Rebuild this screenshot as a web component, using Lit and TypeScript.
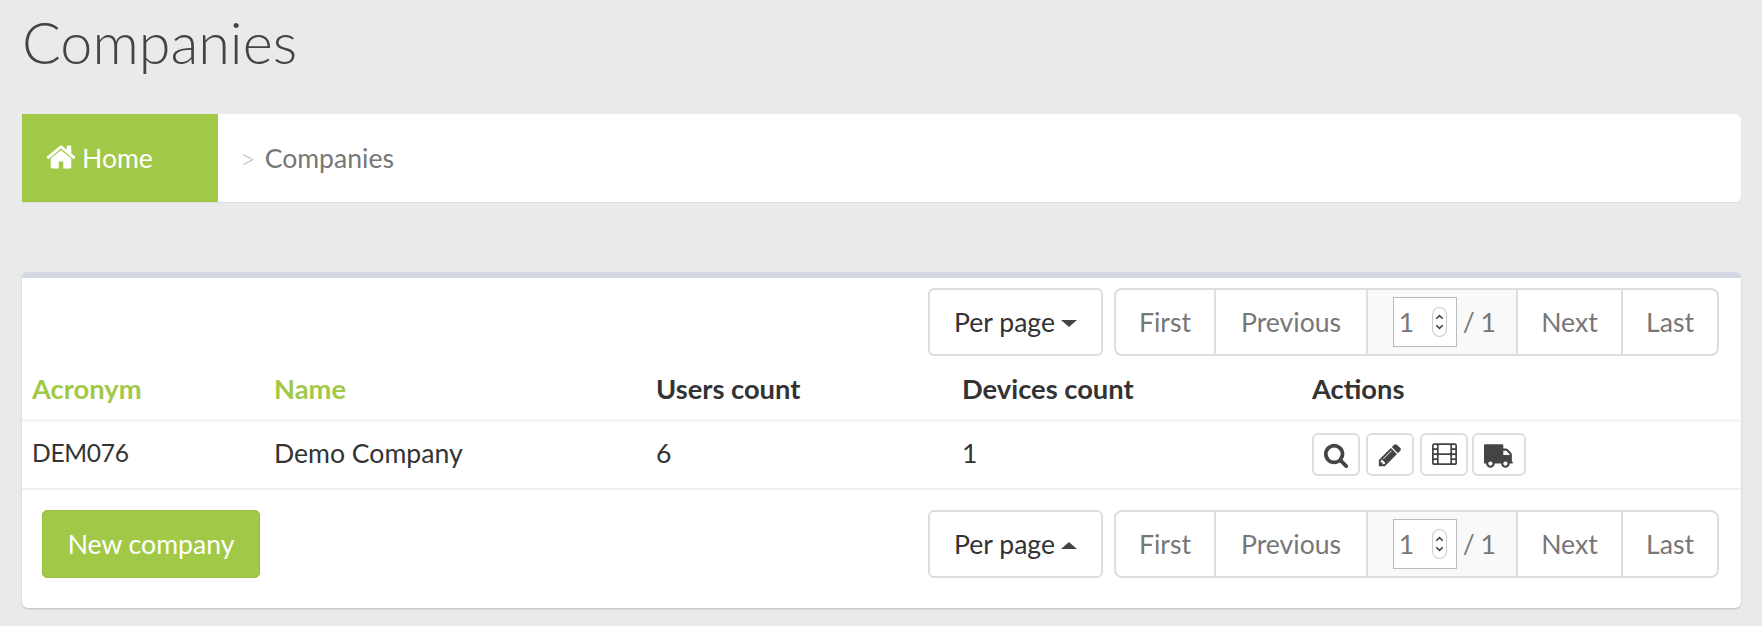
import { LitElement, html, css, svg } from "lit";
import { customElement } from "lit/decorators.js";

const ICONS: Record<string, [string, string]> = {
  home: ["0 0 1792 1792", "M1472 992v480q0 26-19 45t-45 19h-384v-384h-256v384h-384q-26 0-45-19t-19-45v-480q0-1 .5-3t.5-3l575-474 575 474q1 2 1 6zm223-69l-62 74q-8 9-21 11h-3q-13 0-21-7l-692-577-692 577q-12 8-24 7-13-2-21-11l-62-74q-8-10-7-23.5t11-21.5l719-599q32-26 76-26t76 26l244 204v-195q0-14 9-23t23-9h192q14 0 23 9t9 23v408l219 182q10 8 11 21.5t-7 23.5z"],
  search: ["0 0 1792 1792", "M1216 832q0-185-131.5-316.5t-316.5-131.5-316.5 131.5-131.5 316.5 131.5 316.5 316.5 131.5 316.5-131.5 131.5-316.5zm512 832q0 52-38 90t-90 38q-54 0-90-38l-343-342q-179 124-399 124-143 0-273.5-55.5t-225-150-150-225-55.5-273.5 55.5-273.5 150-225 225-150 273.5-55.5 273.5 55.5 225 150 150 225 55.5 273.5q0 220-124 399l343 343q37 37 37 90z"],
  pencil: ["0 0 1792 1792", "M491 1536l91-91-235-235-91 91v107h128v128h107zm523-928q0-22-22-22-10 0-17 7l-542 542q-7 7-7 17 0 22 22 22 10 0 17-7l542-542q7-7 7-17zm-54-192l416 416-832 832h-416v-416zm683 96q0 53-37 90l-166 166-416-416 166-165q36-38 90-38 53 0 91 38l235 234q37 39 37 91z"],
  film: ["0 0 1920 1792", "M384 1472v-128q0-26-19-45t-45-19h-128q-26 0-45 19t-19 45v128q0 26 19 45t45 19h128q26 0 45-19t19-45zm0-384v-128q0-26-19-45t-45-19h-128q-26 0-45 19t-19 45v128q0 26 19 45t45 19h128q26 0 45-19t19-45zm0-384v-128q0-26-19-45t-45-19h-128q-26 0-45 19t-19 45v128q0 26 19 45t45 19h128q26 0 45-19t19-45zm1024 768v-512q0-26-19-45t-45-19h-768q-26 0-45 19t-19 45v512q0 26 19 45t45 19h768q26 0 45-19t19-45zm-1024-1152v-128q0-26-19-45t-45-19h-128q-26 0-45 19t-19 45v128q0 26 19 45t45 19h128q26 0 45-19t19-45zm1408 1152v-128q0-26-19-45t-45-19h-128q-26 0-45 19t-19 45v128q0 26 19 45t45 19h128q26 0 45-19t19-45zm-384-768v-512q0-26-19-45t-45-19h-768q-26 0-45 19t-19 45v512q0 26 19 45t45 19h768q26 0 45-19t19-45zm384 384v-128q0-26-19-45t-45-19h-128q-26 0-45 19t-19 45v128q0 26 19 45t45 19h128q26 0 45-19t19-45zm0-384v-128q0-26-19-45t-45-19h-128q-26 0-45 19t-19 45v128q0 26 19 45t45 19h128q26 0 45-19t19-45zm0-384v-128q0-26-19-45t-45-19h-128q-26 0-45 19t-19 45v128q0 26 19 45t45 19h128q26 0 45-19t19-45zm128-160v1344q0 66-47 113t-113 47h-1600q-66 0-113-47t-47-113v-1344q0-66 47-113t113-47h1600q66 0 113 47t47 113z"],
  truck: ["0 0 1792 1792", "M640 1408q0-52-38-90t-90-38-90 38-38 90 38 90 90 38 90-38 38-90zm-384-512h384v-256h-158q-13 0-22 9l-195 195q-9 9-9 22v30zm1280 512q0-52-38-90t-90-38-90 38-38 90 38 90 90 38 90-38 38-90zm256-1088v1024q0 15-4 26.5t-13.5 18.5-16.5 11.5-23.5 6-22.5 2-25.5 0-22.5-.5q0 106-75 181t-181 75-181-75-75-181h-384q0 106-75 181t-181 75-181-75-75-181h-64q-3 0-22.5.5t-25.5 0-22.5-2-23.5-6-16.5-11.5-13.5-18.5-4-26.5q0-26 19-45t45-19v-320q0-8-.5-35t0-38 2.5-34.5 6.5-37 14-30.5 22.5-30l198-198q19-19 50.5-32t58.5-13h160v-192q0-26 19-45t45-19h1024q26 0 45 19t19 45z"],
};

const icon = (name: string, cls: string) => {
  const [vb, d] = ICONS[name];
  return html`<svg class="icon ${cls}" viewBox=${vb} aria-hidden="true">${svg`<path fill="currentColor" d=${d}></path>`}</svg>`;
};

@customElement("app-root")
export class AppRoot extends LitElement {
  static styles = css`
    :host {
      display: block;
      height: 626px;
      box-sizing: border-box;
      background: #eaeaea;
      font-family: "Lato", "Noto Sans", sans-serif;
      font-size: 26.6px;
      color: #333;
      padding: 0 21px 0 22px;
      overflow: hidden;
    }
    h1 {
      margin: 0;
      height: 114px;
      box-sizing: border-box;
      padding-top: 4px;
      font-size: 57.5px;
      line-height: 76px;
      font-weight: 300;
      color: #444;
    }
    .crumbs {
      display: flex;
      align-items: center;
      height: 88px;
      background: #fff;
      border-radius: 0 6px 6px 0;
      box-shadow: 0 1px 1px rgba(0, 0, 0, 0.05);
      color: #777;
    }
    .home {
      display: flex;
      align-items: center;
      gap: 5px;
      align-self: stretch;
      width: 196px;
      box-sizing: border-box;
      padding-left: 23px;
      background: #a1c947;
      color: #fff;
    }
    .home .icon { width: 32px; height: 32px; margin-top: -2px; }
    .sep { margin-left: 22px; margin-right: 9px; color: #bbb; font-size: 27px; font-weight: 300; }
    .panel {
      margin-top: 70px;
      background: #fff;
      border-top: 6px solid #d3d8e3;
      border-radius: 6px;
      box-shadow: 0 1px 2px rgba(0, 0, 0, 0.2);
      height: 336px;
      box-sizing: border-box;
    }
    .top {
      display: flex;
      justify-content: flex-end;
      padding: 10px 22px 0 0;
    }
    .pager { display: flex; gap: 11px; }
    .perpage {
      display: flex;
      align-items: center;
      justify-content: center;
      gap: 6px;
      width: 175px;
      height: 68px;
      box-sizing: border-box;
      border: 2px solid #ddd;
      border-radius: 6px;
      color: #333;
    }
    .caret { width: 0; height: 0; border-left: 8px solid transparent; border-right: 8px solid transparent; border-top: 7px solid #444; margin-top: 3px; }
    .caret.up { border-top: 0; border-bottom: 7px solid #444; }
    .group {
      display: flex;
      height: 68px;
      width: 605px;
      box-sizing: border-box;
      border: 2px solid #ddd;
      border-radius: 8px;
      color: #777;
      overflow: hidden;
    }
    .cell {
      display: flex;
      align-items: center;
      justify-content: center;
      box-sizing: border-box;
      border-left: 2px solid #ddd;
    }
    .cell:first-child { border-left: 0; }
    .first { width: 98px; }
    .prev { width: 152px; }
    .cur { width: 150px; background: #f9f9f9; gap: 6px; padding-left: 4px; }
    .next { width: 105px; }
    .last { flex: 1; }
    .slash { letter-spacing: -0.6px; }
    .num {
      display: flex;
      align-items: center;
      justify-content: space-between;
      width: 64px;
      height: 50px;
      box-sizing: border-box;
      border: 1px solid #bbb;
      background: #fff;
      padding: 0 9px 0 5px;
    }
    .spin {
      width: 15px;
      height: 30px;
      display: block;
    }
    table {
      width: 100%;
      border-collapse: collapse;
      table-layout: fixed;
    }
    th, td { text-align: left; padding: 0 0 0 10px; }
    th { height: 64px; font-weight: 700; font-size: 27.3px; border-bottom: 3px solid #f4f4f4; padding-top: 2px; box-sizing: border-box; }
    th.sort { color: #a1c947; }
    td { height: 69px; border-bottom: 2px solid #f0f0f0; box-sizing: border-box; padding-bottom: 4px; }
    td.code { font-size: 24.6px; letter-spacing: -0.3px; }
    .actions { display: flex; gap: 6px; padding-top: 4px; }
    .act {
      display: flex;
      align-items: center;
      justify-content: center;
      width: 48px;
      height: 43px;
      box-sizing: border-box;
      border: 2px solid #ddd;
      border-radius: 6px;
      color: #444;
    }
    .act.wide { width: 54px; margin-left: -2px; }
    .act .icon { width: 26px; height: 26px; }
    .act .film { width: 25px; }
    .act .flip { transform: scaleX(-1); width: 30px; height: 30px; }
    .bottom {
      display: flex;
      justify-content: space-between;
      padding: 20px 22px 0 20px;
    }
    .new {
      display: flex;
      align-items: center;
      justify-content: center;
      width: 218px;
      height: 68px;
      box-sizing: border-box;
      background: #a1c947;
      border: 1px solid #96bd3c;
      border-radius: 5px;
      color: #fff;
    }
  `;

  private pager(up: boolean) {
    return html`<div class="pager">
      <div class="perpage">Per page <span class="caret ${up ? "up" : ""}"></span></div>
      <div class="group">
        <div class="cell first">First</div>
        <div class="cell prev">Previous</div>
        <div class="cell cur">
          <div class="num">1
            <svg class="spin" viewBox="0 0 14 28" fill="none">
              <rect x="0.5" y="0.5" width="13" height="27" rx="6.5" fill="#fff" stroke="#ccc"></rect>
              <path d="M4 11l3-3 3 3M4 17l3 3 3-3" stroke="#444" stroke-width="1.5"></path>
            </svg>
          </div>
          <span class="slash">/ 1</span>
        </div>
        <div class="cell next">Next</div>
        <div class="cell last">Last</div>
      </div>
    </div>`;
  }

  render() {
    return html`
      <h1>Companies</h1>
      <nav class="crumbs">
        <div class="home">${icon("home", "")}Home</div>
        <span class="sep">&gt;</span><span>Companies</span>
      </nav>
      <section class="panel">
        <div class="top">${this.pager(false)}</div>
        <table>
          <colgroup>
            <col style="width:242px" /><col style="width:382px" /><col style="width:306px" /><col style="width:350px" /><col />
          </colgroup>
          <thead>
            <tr>
              <th class="sort">Acronym</th><th class="sort">Name</th><th>Users count</th><th>Devices count</th><th>Actions</th>
            </tr>
          </thead>
          <tbody>
            <tr>
              <td class="code">DEM076</td><td>Demo Company</td><td>6</td><td>1</td>
              <td>
                <div class="actions">
                  <div class="act">${icon("search", "")}</div>
                  <div class="act">${icon("pencil", "")}</div>
                  <div class="act">${icon("film", "film")}</div>
                  <div class="act wide">${icon("truck", "flip")}</div>
                </div>
              </td>
            </tr>
          </tbody>
        </table>
        <div class="bottom">
          <div class="new">New company</div>
          ${this.pager(true)}
        </div>
      </section>
    `;
  }
}
